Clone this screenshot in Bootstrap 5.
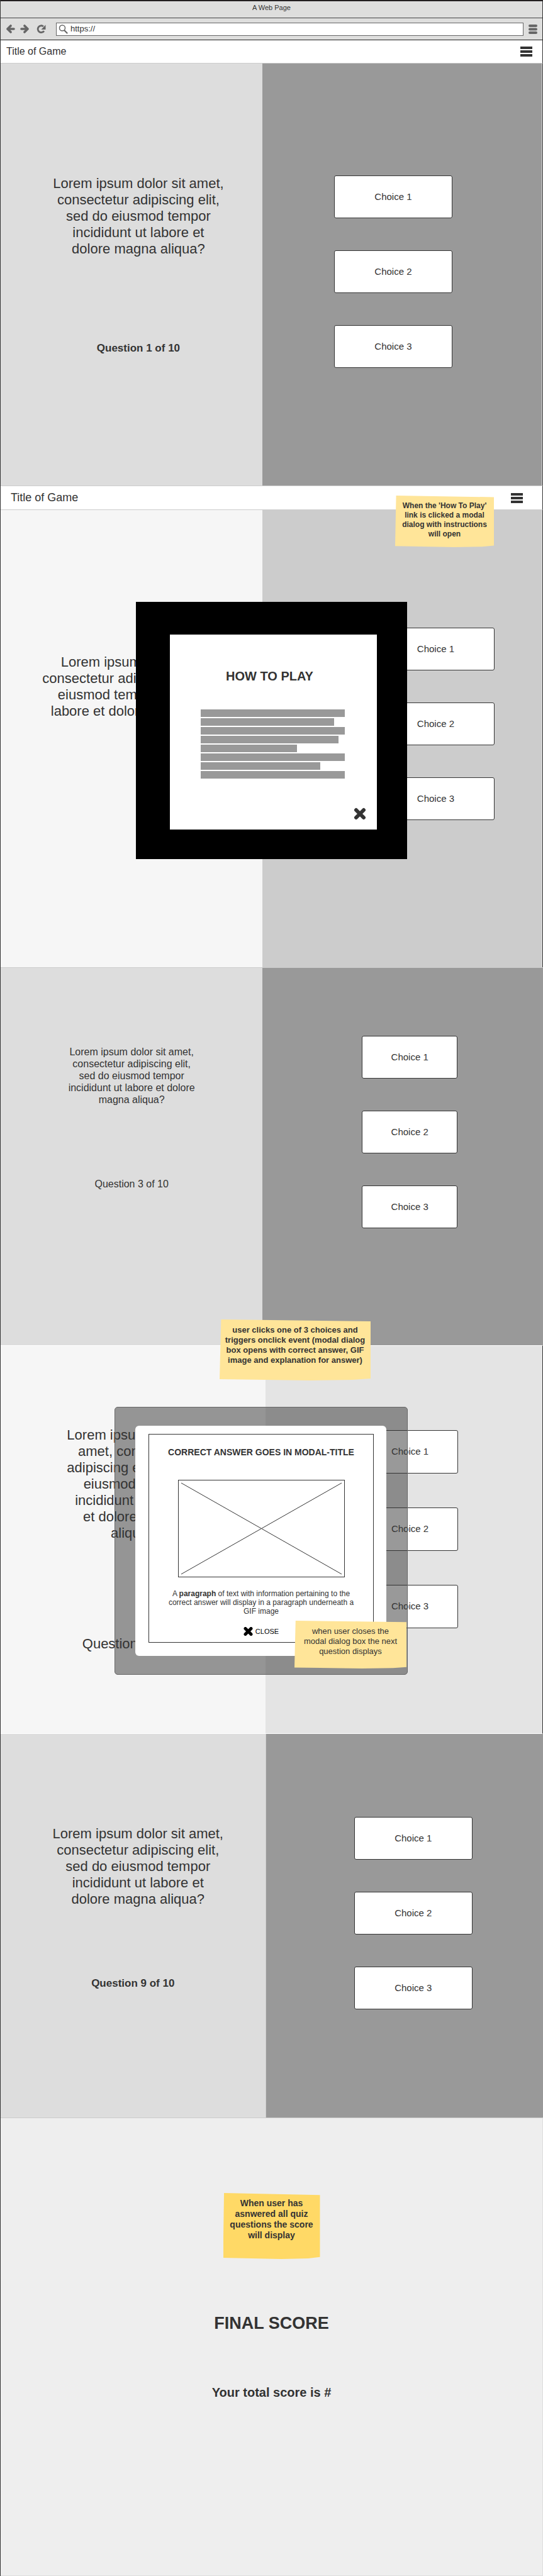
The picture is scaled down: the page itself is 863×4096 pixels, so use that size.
<!DOCTYPE html>
<html lang="en">
<head>
<meta charset="utf-8">
<meta name="viewport" content="width=device-width, initial-scale=1">
<title>A Web Page</title>
<link href="https://cdn.jsdelivr.net/npm/bootstrap@5.3.0/dist/css/bootstrap.min.css" rel="stylesheet">
<style>
  body { font-family: "Liberation Sans", Arial, sans-serif; font-size: 16px; color: #333; background: #fff; }
  .frame { border-left: 1px solid #333; }
  .edge { border-right: 1px solid #333; }

  /* Browser chrome */
  .chrome { background: #dededd; border-top: 2px solid #231f20; border-bottom: 1px solid #222; }
  .chrome-title { height: 27px; padding-bottom: 6px; font-size: 11px; border-bottom: 1px solid #444; }
  .chrome-tools { height: 34px; padding: 0 8px 0 9px; color: #666; }
  .tool-btn { padding: 0; border: 0; background: none; color: inherit; line-height: 0; }
  .url { height: 21px; background: #fff; border: 1px solid #666; padding-left: 3px; }
  .url input { border: 0; outline: 0; padding: 0; font-size: 13px; line-height: 16px; color: #333; background: transparent; }

  /* Game header */
  .topbar { background: #fff; height: 37px; padding: 0 16px 0 9px; border-bottom: 1px solid #ccc; }
  .topbar-wide { height: 39px; padding: 0 31px 0 16px; border-top: 1px solid #ccc; }
  .topbar a { color: #333; text-decoration: none; font-size: 16px; }
  .topbar-wide a { font-size: 18px; }

  /* Split screens */
  .split { display: grid; grid-template-columns: 483fr 517fr; }
  .split-even { grid-template-columns: 489fr 511fr; }
  .ask { background: #ddd; text-align: center; }
  .pick { background: #999; gap: 51px; }
  .ask p { margin: 0; line-height: 26px; white-space: nowrap; }
  .big { font-size: 22px; }
  .count { font-size: 17px; font-weight: bold; }
  .choice { width: 188px; height: 68px; background: #fff; border: 1px solid #333; border-radius: 3px; color: #333; font-size: 15px; padding: 0; }
  .choice-narrow { width: 152px; }

  .s1 .ask { padding: 178px 0 0 22px; gap: 132px; }
  .s1 .pick { padding: 178px 28px 187px 0; border-right: 1px solid #ddd; }
  .s2 .ask { background: #f6f6f6; padding: 229px 0 0 47px; }
  .s2 .pick { background: #ccc; padding: 187px 0 234px 107px; border-right: 1px solid #ddd; }
  .s3 { border-top: 1px solid #ccc; }
  .s3 .ask { padding: 124px 0 0; gap: 115px; }
  .s3 .ask p { line-height: 19px; }
  .s3 .pick { padding: 108px 0 186px 22px; }
  .s4 { border-top: 1px solid #fff; border-bottom: 1px solid #fff; }
  .s4 .ask { background: #f6f6f6; padding: 129px 0 0; gap: 150px; }
  .s4 .pick { background: #e4e4e4; padding: 134px 0 167px 19px; gap: 54px; }
  .s4 .choice { height: 69px; }
  .s5 .ask { padding: 146px 0 0; gap: 108px; border-right: 1px solid #ccc; }
  .s5 .ask .big { padding-left: 16px; }
  .s5 .pick { padding: 132px 0 172px 28px; }

  /* Sticky notes */
  .sticky { background: #ffe599; text-align: center; color: #333; margin: 0; white-space: nowrap;
    clip-path: polygon(1% 0, 100% 3%, 100% 97%, 88% 99%, 60% 100%, 0 98%); }
  .note-play { top: 16px; right: 78px; width: 157px; height: 82px; padding-top: 9px; font: bold 12px/15px "Liberation Sans", Arial, sans-serif; z-index: 2; }
  .note-event { top: -42px; left: 348px; width: 240px; height: 97px; padding-top: 9px; font: bold 13px/16px "Liberation Sans", Arial, sans-serif; z-index: 2; }
  .note-next { bottom: 9px; right: 1px; width: 178px; height: 76px; padding-top: 9px; font: 13px/16px "Liberation Sans", Arial, sans-serif; }
  .note-score { background: #ffd966; width: 154px; height: 105px; padding-top: 8px; font: bold 14px/17px "Liberation Sans", Arial, sans-serif; }

  /* How-to-play dialog */
  .shade { top: 146px; left: 50%; width: 431px; margin-left: -216px; background: #000; padding: 52px 48px 47px 54px; }
  .howto { background: #fff; height: 310px; padding: 54px 17px 16px 49px; }
  .howto h2 { margin: 0 34px 40px 0; font-size: 20px; line-height: 25px; font-weight: bold; text-align: center; padding-right: 9px; }
  .bars { gap: 2px; margin-right: 34px; }
  .bars span { display: block; height: 12px; background: #999; }
  .howto .tool-btn { color: #333; margin-top: 46px; }

  /* Answer dialog */
  .veil { top: 97px; left: 181px; width: 466px; background: rgba(51,51,51,.5); border: 1px solid #666; border-radius: 5px; padding: 29px 33px 29px 32px; }
  .answer { background: #fff; border-radius: 6px; padding: 13px 20px 21px 21px; }
  .answer-in { border: 1px solid #333; height: 332px; padding-top: 18px; text-align: center; }
  .answer h2 { margin: 0 0 34px; font-size: 14px; line-height: 20px; font-weight: bold; white-space: nowrap; }
  .gif { display: block; width: 265px; height: 155px; margin: 0 auto 19px; border: 1px solid #333; }
  .answer p { margin: 0 0 15px; font-size: 12px; line-height: 14px; }
  .close-link { border: 0; background: none; padding: 0; color: #000; font-size: 11px; line-height: 14px; }

  /* Final screen */
  .final { background: #eee; border-top: 1px solid #ccc; border-right: 1px solid #ddd; border-bottom: 1px solid #ddd; padding: 119px 0 279px; text-align: center; }
  .final h2 { margin: 86px 0 82px; font-size: 27px; line-height: 32px; font-weight: bold; }
  .final .score { margin: 0; font-size: 20px; line-height: 24px; font-weight: bold; }
</style>
</head>
<body>
<div class="frame">
  <header class="chrome edge">
    <div class="chrome-title d-flex align-items-center justify-content-center">A Web Page</div>
    <div class="chrome-tools d-flex align-items-center">
      <button class="tool-btn me-2" aria-label="Back"><svg width="14" height="14" viewBox="0 0 14 14" fill="none" stroke="currentColor" stroke-width="3.600" stroke-linecap="round" stroke-linejoin="round"><path d="M7 2 2 7l5 5M2.500 7H12"/></svg></button>
      <button class="tool-btn me-2" aria-label="Forward"><svg width="14" height="14" viewBox="0 0 14 14" fill="none" stroke="currentColor" stroke-width="3.600" stroke-linecap="round" stroke-linejoin="round"><path d="m7 2 5 5-5 5M11.500 7H2"/></svg></button>
      <button class="tool-btn ms-1 me-3" aria-label="Reload"><svg width="15" height="14" viewBox="0 0 15 14"><path d="M12 10.200A5.400 5.400 0 1 1 11 3" fill="none" stroke="currentColor" stroke-width="2.800"/><path d="M14.500.5v7.500H7.500z" fill="currentColor"/></svg></button>
      <div class="url d-flex align-items-center flex-grow-1">
        <svg width="15" height="15" viewBox="0 0 15 15" fill="none" stroke="#666" stroke-linecap="round"><circle cx="6" cy="5.500" r="4.500" stroke-width="1.500"/><path d="m9.500 9.500 4 4" stroke-width="2.200"/></svg>
        <input class="flex-grow-1 ms-1" type="text" value="https://" aria-label="Address">
      </div>
      <button class="tool-btn ms-2" aria-label="Browser menu"><svg width="14" height="15" viewBox="0 0 14 15" fill="currentColor"><rect y="0" width="14" height="4" rx="2"/><rect y="5.500" width="14" height="4" rx="2"/><rect y="11" width="14" height="4" rx="2"/></svg></button>
    </div>
  </header>

  <nav class="topbar edge d-flex align-items-center justify-content-between">
    <a href="#">Title of Game</a>
    <button class="tool-btn" aria-label="Menu"><svg width="19" height="16" viewBox="0 0 19 16" fill="#333"><path d="M0 0h19v4H0zM0 6h19v4H0zM0 12h19v4H0z"/></svg></button>
  </nav>

  <section class="split s1 edge">
    <div class="ask d-flex flex-column align-items-center">
      <p class="big">Lorem ipsum dolor sit amet,<br>consectetur adipiscing elit,<br>sed do eiusmod tempor<br>incididunt ut labore et<br>dolore magna aliqua?</p>
      <p class="count">Question 1 of 10</p>
    </div>
    <div class="pick d-flex flex-column align-items-center">
      <button class="choice">Choice 1</button>
      <button class="choice">Choice 2</button>
      <button class="choice">Choice 3</button>
    </div>
  </section>

  <div class="position-relative">
    <nav class="topbar topbar-wide edge d-flex align-items-center justify-content-between">
      <a href="#">Title of Game</a>
      <button class="tool-btn" aria-label="Menu"><svg width="19" height="16" viewBox="0 0 19 16" fill="#333"><path d="M0 0h19v4H0zM0 6h19v4H0zM0 12h19v4H0z"/></svg></button>
    </nav>
    <p class="sticky note-play position-absolute">When the 'How To Play'<br>link is clicked a modal<br>dialog with instructions<br>will open</p>
    <section class="split s2 edge position-relative">
      <div class="ask d-flex flex-column align-items-center">
        <p class="big">Lorem ipsum dolor sit amet,<br>consectetur adipiscing elit, sed do<br>eiusmod tempor incididunt ut<br>labore et dolore magna aliqua?</p>
      </div>
      <div class="pick d-flex flex-column align-items-center">
        <button class="choice">Choice 1</button>
        <button class="choice">Choice 2</button>
        <button class="choice">Choice 3</button>
      </div>
      <div class="shade position-absolute">
        <div class="howto d-flex flex-column">
          <h2>HOW TO PLAY</h2>
          <div class="bars d-flex flex-column">
            <span class="w-100"></span><span style="width:93%"></span><span class="w-100"></span><span style="width:96%"></span>
            <span style="width:67%"></span><span class="w-100"></span><span style="width:83%"></span><span class="w-100"></span>
          </div>
          <button class="tool-btn align-self-end" aria-label="Close"><svg width="20" height="20" viewBox="0 0 20 20" fill="none" stroke="currentColor" stroke-width="6" stroke-linecap="round"><path d="m4 4 12 12M16 4 4 16"/></svg></button>
        </div>
      </div>
    </section>
  </div>

  <section class="split s3">
    <div class="ask d-flex flex-column align-items-center">
      <p>Lorem ipsum dolor sit amet,<br>consectetur adipiscing elit,<br>sed do eiusmod tempor<br>incididunt ut labore et dolore<br>magna aliqua?</p>
      <p>Question 3 of 10</p>
    </div>
    <div class="pick d-flex flex-column align-items-center">
      <button class="choice choice-narrow">Choice 1</button>
      <button class="choice choice-narrow">Choice 2</button>
      <button class="choice choice-narrow">Choice 3</button>
    </div>
  </section>

  <section class="split split-even s4 edge position-relative">
    <div class="ask d-flex flex-column align-items-center">
      <p class="big">Lorem ipsum dolor sit<br>amet, consectetur<br>adipiscing elit, sed do<br>eiusmod tempor<br>incididunt ut labore<br>et dolore magna<br>aliqua?</p>
      <p class="big">Question 4 of 10</p>
    </div>
    <div class="pick d-flex flex-column align-items-center">
      <button class="choice choice-narrow">Choice 1</button>
      <button class="choice choice-narrow">Choice 2</button>
      <button class="choice choice-narrow">Choice 3</button>
    </div>
    <p class="sticky note-event position-absolute">user clicks one of 3 choices and<br>triggers onclick event (modal dialog<br>box opens with correct answer, GIF<br>image and explanation for answer)</p>
    <div class="veil position-absolute">
      <div class="answer">
        <div class="answer-in">
          <h2>CORRECT ANSWER GOES IN MODAL-TITLE</h2>
          <svg class="gif" viewBox="0 0 263 153" stroke="#333" stroke-width="1"><path d="m4 4 255 145M259 4 4 149"/></svg>
          <p>A <b>paragraph</b> of text with information pertaining to the<br>correct answer will display in a paragraph underneath a<br>GIF image</p>
          <button class="close-link d-inline-flex align-items-center"><svg class="me-1" width="15" height="14" viewBox="0 0 15 14" fill="none" stroke="#000" stroke-width="5" stroke-linecap="round"><path d="m3 2.500 9 9M12 2.500l-9 9"/></svg>CLOSE</button>
        </div>
      </div>
      <p class="sticky note-next position-absolute">when user closes the<br>modal dialog box the next<br>question displays</p>
    </div>
  </section>

  <section class="split split-even s5">
    <div class="ask d-flex flex-column align-items-center">
      <p class="big">Lorem ipsum dolor sit amet,<br>consectetur adipiscing elit,<br>sed do eiusmod tempor<br>incididunt ut labore et<br>dolore magna aliqua?</p>
      <p class="count">Question 9 of 10</p>
    </div>
    <div class="pick d-flex flex-column align-items-center">
      <button class="choice">Choice 1</button>
      <button class="choice">Choice 2</button>
      <button class="choice">Choice 3</button>
    </div>
  </section>

  <section class="final d-flex flex-column align-items-center">
    <p class="sticky note-score">When user has<br>asnwered all quiz<br>questions the score<br>will display</p>
    <h2>FINAL SCORE</h2>
    <p class="score">Your total score is #</p>
  </section>
</div>
<script src="https://cdn.jsdelivr.net/npm/bootstrap@5.3.0/dist/js/bootstrap.bundle.min.js"></script>
</body>
</html>
